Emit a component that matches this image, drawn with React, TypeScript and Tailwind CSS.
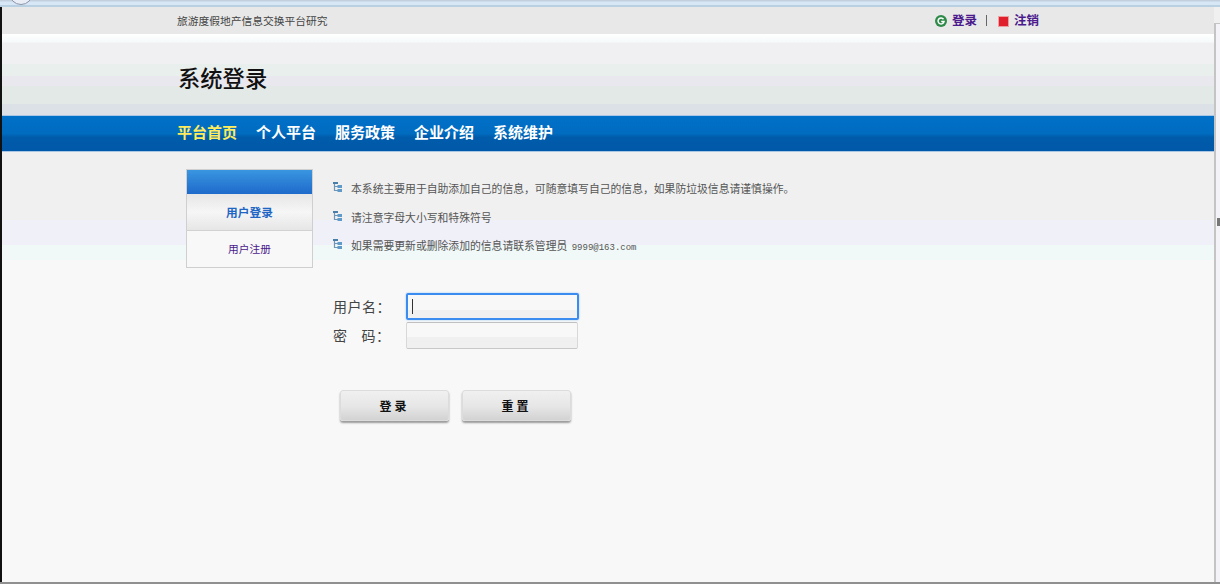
const cjk = "font-['Noto_Sans_CJK_SC','Liberation_Sans',sans-serif]";

function Bullet() {
  return (
    <svg width="10" height="11" viewBox="0 0 10 11" className="shrink-0">
      <rect x="0" y="0" width="5" height="2" fill="#4a7ea8" />
      <path d="M1.5 2V9M1.5 4.5H5M1.5 8.5H5" stroke="#6f94b4" strokeWidth="1.2" fill="none" />
      <rect x="4.5" y="3" width="4.5" height="3" fill="#5f9ac8" />
      <rect x="4.5" y="7" width="4.5" height="3" fill="#5f9ac8" />
    </svg>
  );
}

function InfoRow({ children }: { children: React.ReactNode }) {
  return (
    <div className="flex h-[28.5px] items-start">
      <div className="mt-[2px] w-[18px] shrink-0"><Bullet /></div>
      <div className="text-[10.82px] leading-[16px] text-[#555555] whitespace-nowrap">{children}</div>
    </div>
  );
}

function Btn({ label }: { label: string }) {
  return (
    <button className="h-[31px] w-[109px] rounded-[3px] border border-[#dcdcdc] bg-[linear-gradient(#f0f0f0,#e6e6e6_55%,#d2d2d2)] text-[12px] font-bold tracking-[3px] text-[#111111] shadow-[0_2px_2px_#9a9a9a]">
      {label}
    </button>
  );
}

export default function App() {
  return (
    <div className={`${cjk} flex h-[584px] w-[1220px] flex-col overflow-hidden bg-[#f8f8f8]`}>
      <div className="relative flex h-[7px] shrink-0 border-b-2 border-[#b9cfe2] bg-[linear-gradient(#c2d0de_1px,#d8e7f6_2px)]">
        <div className="absolute left-[9px] top-[-19px] h-[24px] w-[24px] rounded-full border border-[#8a94a8] bg-[#e9eef6]" />
      </div>
      <div className="flex min-h-0 flex-1 border-b-2 border-[#909090]">
        <div className="w-[2px] shrink-0 bg-[#111111]" />
        <div className="flex min-w-0 flex-1 flex-col">
          <div className="flex h-[27px] shrink-0 items-center justify-between bg-[#e8e8e8] pl-[175px] pr-[175px]">
            <span className="mt-[1px] text-[10.75px] text-[#444444]">旅游度假地产信息交换平台研究</span>
            <div className="flex items-center text-[12.5px] font-bold text-[#4b1a8c]">
              <svg width="12" height="12" viewBox="0 0 12 12" className="mr-[5px]">
                <circle cx="6" cy="6" r="6" fill="#2f8a4a" />
                <path d="M8.5 4.2A3 3 0 1 0 9 6.5H6.2" stroke="#ffffff" strokeWidth="1.5" fill="none" />
              </svg>
              <span>登录</span>
              <span className="ml-[9px] mr-[11px] h-[11px] w-px bg-[#666666]" />
              <span className="mr-[5px] mt-[2px] h-[11px] w-[11px] border border-[#eda0a0] bg-[#e0202c]" />
              <span>注销</span>
            </div>
          </div>
          <div className="flex h-[81px] shrink-0 items-center bg-[linear-gradient(#ffffff,#f6fafb_8px,#f0f0f2_9px,#f0f0f2_30px,#e9efed_30px,#e9efed_42px,#e8e8ee_42px,#e8e8ee_52px,#e3e9e6_52px,#e3e9e6_70px,#dce1e7_70px,#dce1e7_81px)] pl-[176px]">
            <h1 className="mt-[7px] text-[22.3px] font-medium text-[#111111]">系统登录</h1>
          </div>
          <nav className="flex h-[37px] shrink-0 items-center gap-[19px] border-y border-[#a9c7e4] bg-[linear-gradient(#0070c8,#006cc0_50%,#005cab_60%,#0058a8)] pb-[2px] pl-[175px] text-[15px] font-bold text-white">
            <span className="text-[#ffec5c]">平台首页</span>
            <span>个人平台</span>
            <span>服务政策</span>
            <span>企业介绍</span>
            <span>系统维护</span>
          </nav>
          <main className="flex-1 bg-[linear-gradient(#f0f0f0,#f0f0f0_68px,#f0f0f8_68px,#f0f0f8_93px,#f0f8f8_93px,#f0f8f8_108px,#f8f8f8_108px)] pl-[184px] pt-[17px]">
            <div className="flex">
              <aside className="h-[99px] w-[127px] shrink-0 border border-[#cfcfcf] text-center">
                <div className="h-[24px] bg-[linear-gradient(#3a96e0,#1e6acb)]" />
                <div className="flex h-[37px] items-center justify-center border-b border-[#d2d2d2] bg-[linear-gradient(#e6e6e6,#f6f6f6_50%,#e6e6e6)] text-[11.7px] font-bold text-[#1f66c4]">用户登录</div>
                <div className="flex h-[36px] items-center justify-center bg-[#f8f8f8] text-[10.7px] text-[#4b1a8c]">用户注册</div>
              </aside>
              <div className="ml-[20px] h-[99px] pt-[11px]">
                <InfoRow>本系统主要用于自助添加自己的信息，可随意填写自己的信息，如果防垃圾信息请谨慎操作。</InfoRow>
                <InfoRow>请注意字母大小写和特殊符号</InfoRow>
                <InfoRow>如果需要更新或删除添加的信息请联系管理员 <span className="ml-[2px] font-['Liberation_Mono',monospace] text-[9px]">9999@163.com</span></InfoRow>
              </div>
            </div>
            <div className="ml-[147px] mt-[24px] w-[246px]">
              <div className="flex h-[29px] items-center text-[14px] text-[#444444]">
                <span className="flex w-[73px] tracking-[0.5px]">用户名：</span>
                <div className="flex h-[27px] w-[173px] items-center rounded-[2px] border-2 border-[#3b8cf0] bg-[linear-gradient(#f8f8f8_65%,#f0f0f0_65%)] pl-[4px] shadow-[0_0_2px_#8cc0f8]">
                  <span className="h-[15px] w-px bg-[#333333]" />
                </div>
              </div>
              <div className="flex h-[29px] items-center text-[14px] text-[#444444]">
                <span className="flex w-[73px] tracking-[0.5px]"><span className="mr-[14px]">密</span>码：</span>
                <div className="h-[27px] w-[172px] rounded-[2px] border border-x-[#d8d8d8] border-b-[#c8c8c8] border-t-[#c0c0c0] bg-[linear-gradient(#f8f8f8_55%,#f0f0f0_55%)]" />
              </div>
            </div>
            <div className="ml-[154px] mt-[40px] flex gap-[13px]">
              <Btn label="登录" />
              <Btn label="重置" />
            </div>
          </main>
        </div>
        <div className="flex w-[6px] shrink-0 flex-col bg-[#ececec]">
          <div className="h-[16px] bg-[#f0f0f0]" />
          <div className="relative flex-1 border-l-2 border-t border-[#c4c4c4] bg-[#f4f4f8]">
            <div className="absolute right-0 top-[194px] h-[8px] w-[3px] bg-[#777777]" />
          </div>
        </div>
      </div>
    </div>
  );
}
